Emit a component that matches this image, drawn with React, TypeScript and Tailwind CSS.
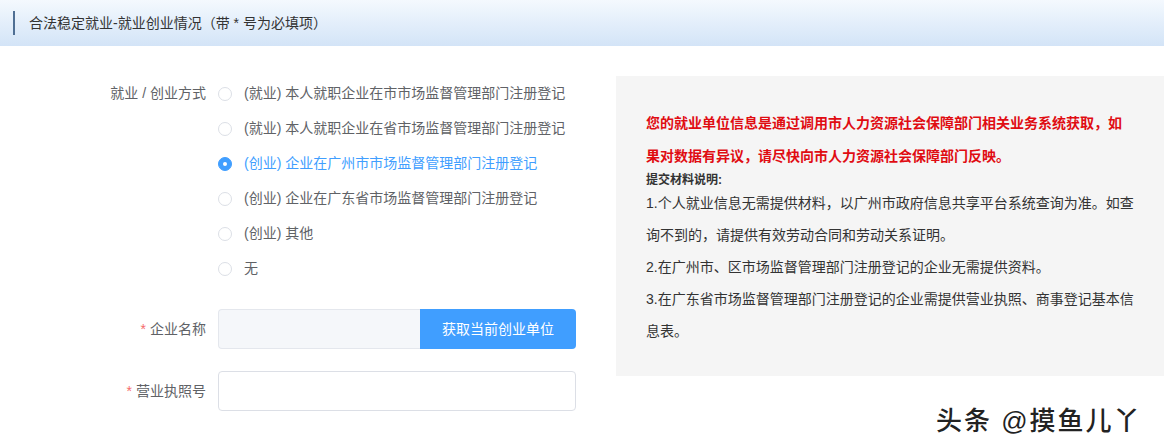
import { useState } from 'react';

const options = [
  '(就业) 本人就职企业在市市场监督管理部门注册登记',
  '(就业) 本人就职企业在省市场监督管理部门注册登记',
  '(创业) 企业在广州市市场监督管理部门注册登记',
  '(创业) 企业在广东省市场监督管理部门注册登记',
  '(创业) 其他',
  '无',
];

const notes = [
  '1.个人就业信息无需提供材料，以广州市政府信息共享平台系统查询为准。如查',
  '询不到的，请提供有效劳动合同和劳动关系证明。',
  '2.在广州市、区市场监督管理部门注册登记的企业无需提供资料。',
  '3.在广东省市场监督管理部门注册登记的企业需提供营业执照、商事登记基本信',
  '息表。',
];

export default function App() {
  const [mode, setMode] = useState(2);

  return (
    <div className="relative w-[1164px] h-[447px] overflow-hidden bg-white font-['Liberation_Sans','Noto_Sans_CJK_SC',sans-serif]">
      {/* Section header */}
      <div className="h-[46px] flex items-center bg-gradient-to-b from-[#f4f9fe] to-[#d3e4f7]">
        <div className="ml-[13px] w-[2px] h-[24px] bg-[#4f6f94]" />
        <span className="ml-[14px] text-[14px] text-[#333]">合法稳定就业-就业创业情况（带 * 号为必填项）</span>
      </div>

      <div className="flex pt-[30px]">
        {/* Form */}
        <div className="w-[616px] shrink-0 pl-[86px]">
          <div className="flex mb-[23px]">
            <div className="w-[132px] h-[35px] pr-[12px] flex items-center justify-end text-[14px] text-[#606266]">
              就业 / 创业方式
            </div>
            <div className="flex flex-col">
              {options.map((opt, idx) => {
                const checked = idx === mode;
                return (
                  <label
                    key={idx}
                    onClick={() => setMode(idx)}
                    className="h-[35px] flex items-center cursor-pointer"
                  >
                    <span
                      className={`w-[14px] h-[14px] rounded-full flex items-center justify-center border ${
                        checked ? 'bg-[#409eff] border-[#409eff]' : 'bg-white border-[#dcdfe6]'
                      }`}
                    >
                      {checked && <span className="w-[4px] h-[4px] rounded-full bg-white" />}
                    </span>
                    <span className={`ml-[12px] text-[14px] ${checked ? 'text-[#409eff]' : 'text-[#606266]'}`}>
                      {opt}
                    </span>
                  </label>
                );
              })}
            </div>
          </div>

          <div className="flex items-center mb-[22px]">
            <div className="w-[132px] pr-[12px] text-right text-[14px] text-[#606266]">
              <span className="text-[#f56c6c] mr-[4px]">*</span>企业名称
            </div>
            <div className="flex w-[358px] h-[40px]">
              <div className="flex-1 bg-[#f5f7fa] border border-[#e4e7ed] border-r-0 rounded-l-[4px]" />
              <button className="w-[156px] bg-[#409eff] text-white text-[14px] rounded-r-[4px]">
                获取当前创业单位
              </button>
            </div>
          </div>

          <div className="flex items-center">
            <div className="w-[132px] pr-[12px] text-right text-[14px] text-[#606266]">
              <span className="text-[#f56c6c] mr-[4px]">*</span>营业执照号
            </div>
            <input className="w-[358px] h-[40px] bg-white border border-[#dcdfe6] rounded-[4px] outline-none px-[15px] text-[14px]" />
          </div>
        </div>

        {/* Notice panel */}
        <div className="flex-1 h-[300px] bg-[#f5f5f5] pl-[30px] pt-[31px]">
          <p className="text-[14px] font-bold text-[#e00c12] leading-[33px] whitespace-nowrap">
            您的就业单位信息是通过调用市人力资源社会保障部门相关业务系统获取，如
            <br />
            果对数据有异议，请尽快向市人力资源社会保障部门反映。
          </p>
          <p className="text-[12px] font-bold text-[#333] leading-[14px]">提交材料说明:</p>
          {notes.map((line, idx) => (
            <p key={idx} className="text-[14px] text-[#333] leading-[32px] whitespace-nowrap">
              {line}
            </p>
          ))}
        </div>
      </div>

      {/* Watermark */}
      <div className="absolute left-[936px] top-[402px] text-[26px] font-medium text-[#222] tracking-[2px] [text-shadow:1px_1px_0_#fff,-1px_-1px_0_#fff,1px_-1px_0_#fff,-1px_1px_0_#fff]">
        头条 @摸鱼儿丫
      </div>
    </div>
  );
}
